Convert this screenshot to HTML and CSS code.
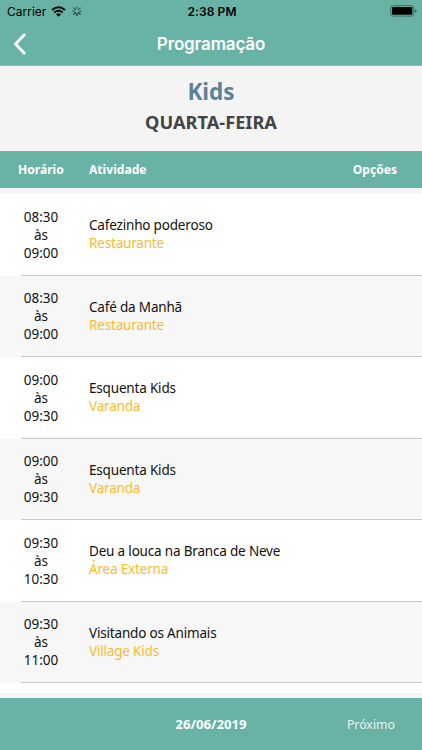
FILE: index.html
```html
<!DOCTYPE html>
<html lang="pt-BR">
<head>
<meta charset="utf-8">
<title>Programação</title>
<link rel="stylesheet" href="styles.css">
</head>
<body>
<header class="top">
  <div class="status">
    <div class="carrier">
      <span>Carrier</span>
      <svg class="wifi" width="15" height="11" viewBox="0 0 15 11" fill="none" stroke="#000">
        <path d="M1 4Q7.500-1.500 14 4" stroke-width="2"/>
        <path d="M3.300 6.400Q7.500 3 11.700 6.400" stroke-width="1.900"/>
        <path d="M5 8.300Q7.500 6.300 10 8.300L7.500 10.800Z" fill="#000" stroke="none"/>
      </svg>
      <svg class="spinner" width="10" height="10" viewBox="-5 -5 10 10" stroke="#102b28" stroke-width="1.200" stroke-linecap="round">
        <path d="M0-2.300V-4.400M1.600-1.600L3.200-3.200" opacity=".55"/>
        <path d="M2.300 0H4.400M-2.300 0H-4.400M-1.600-1.600L-3.200-3.200" opacity=".65"/>
        <path d="M1.600 1.600L3.200 3.200M0 2.300V4.400M-1.600 1.600L-3.200 3.200"/>
      </svg>
    </div>
    <div class="clock">2:38 PM</div>
    <svg class="battery" width="27" height="12" viewBox="0 0 27 12">
      <rect x=".7" y=".7" width="23" height="10.400" rx="2.300" fill="none" stroke="#3c6b64"/>
      <rect x="2" y="2" width="20.300" height="7.800" rx="1" fill="#000"/>
      <path d="M25 4.100Q26.500 4.600 26.500 5.900T25 7.700Z" fill="#3c6b64"/>
    </svg>
  </div>
  <nav class="nav">
    <svg class="back" width="14" height="22" viewBox="0 0 14 22" fill="none" stroke="#fff" stroke-width="2.800"><path d="M12 1L2.500 11L12 21"/></svg>
    <h1 class="title">Programação</h1>
  </nav>
</header>
<section class="heading">
  <h2 class="category">Kids</h2>
  <h3 class="weekday">QUARTA-FEIRA</h3>
</section>
<div class="columns"><span>Horário</span><span>Atividade</span><span class="options">Opções</span></div>
<main class="list">
  <article class="row"><div class="time">08:30<br>às<br>09:00</div><div class="activity">Cafezinho poderoso<span class="place">Restaurante</span></div></article>
  <article class="row"><div class="time">08:30<br>às<br>09:00</div><div class="activity">Café da Manhã<span class="place">Restaurante</span></div></article>
  <article class="row"><div class="time">09:00<br>às<br>09:30</div><div class="activity">Esquenta Kids<span class="place">Varanda</span></div></article>
  <article class="row"><div class="time">09:00<br>às<br>09:30</div><div class="activity">Esquenta Kids<span class="place">Varanda</span></div></article>
  <article class="row"><div class="time">09:30<br>às<br>10:30</div><div class="activity">Deu a louca na Branca de Neve<span class="place">Área Externa</span></div></article>
  <article class="row"><div class="time">09:30<br>às<br>11:00</div><div class="activity">Visitando os Animais<span class="place">Village Kids</span></div></article>
</main>
<footer class="footer"><span></span><strong>26/06/2019</strong><span class="next">Próximo</span></footer>
</body>
</html>
```
FILE: styles.css
```css
* { box-sizing: border-box; }
body {
  margin: 0;
  width: 422px;
  height: 750px;
  overflow: hidden;
  display: flex;
  flex-direction: column;
  background: #f4f4f4;
  font-family: "Noto Sans", sans-serif;
  color: #111;
}
h1, h2, h3 { margin: 0; }
.top { height: 66px; background: #68b2a6; font-family: Inter, sans-serif; border-bottom: 1px solid #85bdb4; }
.status {
  display: grid;
  grid-template-columns: 1fr auto 1fr;
  align-items: center;
  height: 22px;
  padding: 0 5px 0 7px;
  color: #000;
}
.carrier { display: flex; align-items: center; font-size: 12px; }
.wifi { margin-left: 5px; }
.spinner { margin-left: 6px; }
.clock { font-size: 12px; font-weight: 600; letter-spacing: .1px; }
.battery { justify-self: end; }
.nav { display: grid; grid-template-columns: 40px 1fr 40px; align-items: center; height: 43px; }
.back { margin-left: 13px; }
.title { color: #fff; font-size: 17px; font-weight: 600; text-align: center; letter-spacing: -.15px; }
.heading { height: 85px; padding-top: 10px; text-align: center; }
.category { font-size: 22.500px; line-height: 31px; color: #5c8299; }
.weekday { font-size: 18.200px; line-height: 30px; color: #444; }
.columns {
  display: grid;
  grid-template-columns: 71px 1fr auto;
  align-items: center;
  height: 37px;
  padding: 0 25px 0 18px;
  background: #68b2a6;
  color: #fff;
  font-size: 12.100px;
  font-weight: 700;
}
.list { flex: none; height: 499px; margin-top: 6px; background: #fff; }
.row {
  display: grid;
  grid-template-columns: 89px 1fr;
  align-items: center;
  height: 81.500px;
  background: linear-gradient(#c8c8c8, #c8c8c8) 21px 100% / 100% 1px no-repeat;
}
.row:nth-child(even) { background-color: #f7f7f7; }
.time { width: 82px; text-align: center; font-size: 13.500px; line-height: 18px; }
.activity { padding-bottom: 1.500px; font-size: 13.500px; line-height: 18px; letter-spacing: -.18px; }
.place { display: block; color: #fabb2c; }
.footer {
  display: grid;
  grid-template-columns: 1fr auto 1fr;
  align-items: center;
  height: 52px;
  margin-top: auto;
  padding-right: 27px;
  padding-left: 27px;
  background: #68b2a6;
  color: #fff;
  font-size: 13.200px;
}
.next { justify-self: end; font-size: 12.300px; opacity: .85; }
```
